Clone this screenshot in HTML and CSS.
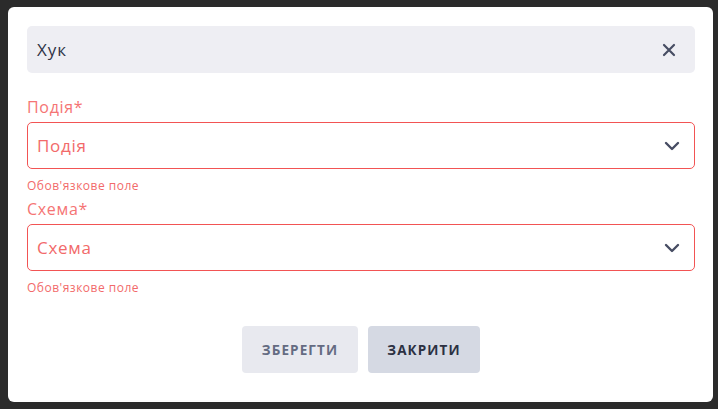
FILE: index.html
```html
<!DOCTYPE html>
<html lang="uk">
<head>
<meta charset="utf-8">
<link rel="stylesheet" href="styles.css">
</head>
<body>
<div class="modal">
  <div class="header">
    <span class="title">Хук</span>
    <svg class="close" width="14" height="14" viewBox="0 0 14 14"><path d="M2 2L12 12M12 2L2 12" stroke="#474d63" stroke-width="2.2" stroke-linecap="round"/></svg>
  </div>
  <div class="field first">
    <div class="label">Подія*</div>
    <div class="select"><span>Подія</span><svg class="chev" width="16" height="10" viewBox="0 0 16 10"><path d="M2 2L8 8L14 2" fill="none" stroke="#474d63" stroke-width="2.4" stroke-linecap="round" stroke-linejoin="round"/></svg></div>
    <div class="error">Обов'язкове поле</div>
  </div>
  <div class="field">
    <div class="label">Схема*</div>
    <div class="select"><span>Схема</span><svg class="chev" width="16" height="10" viewBox="0 0 16 10"><path d="M2 2L8 8L14 2" fill="none" stroke="#474d63" stroke-width="2.4" stroke-linecap="round" stroke-linejoin="round"/></svg></div>
    <div class="error">Обов'язкове поле</div>
  </div>
  <div class="actions">
    <button class="btn save">ЗБЕРЕГТИ</button>
    <button class="btn closebtn">ЗАКРИТИ</button>
  </div>
</div>
</body>
</html>
```
FILE: styles.css
```css
html, body {
  margin: 0;
  padding: 0;
  background: #2b2b2b;
  width: 718px;
  height: 409px;
  overflow: hidden;
  font-family: "Open Sans", "Noto Sans", sans-serif;
}
body {
  padding: 7px 5px 0 8px;
  box-sizing: border-box;
}
.modal {
  background: #ffffff;
  border-radius: 6px;
  width: 705px;
  height: 395px;
  box-sizing: border-box;
  padding: 19px 18px 0 19px;
}
.header {
  height: 47px;
  background: #eeeef3;
  border-radius: 5px;
  display: flex;
  align-items: center;
  justify-content: space-between;
  padding: 0 19px 0 10px;
}
.title {
  font-size: 17px;
  letter-spacing: 0.9px;
  color: #2e3447;
}
.close { display: block; }
.field.first { margin-top: 24px; }
.field { margin-top: 5px; }
.label {
  font-size: 16px;
  line-height: 20px;
  letter-spacing: 0.7px;
  color: #f57474;
  margin-bottom: 5px;
}
.select {
  height: 47px;
  box-sizing: border-box;
  border: 1px solid #f25454;
  border-radius: 5px;
  display: flex;
  align-items: center;
  justify-content: space-between;
  padding: 0 14px 0 9px;
  font-size: 17px;
  letter-spacing: 0.7px;
  color: #f26a6a;
}
.chev { display: block; }
.error {
  margin-top: 9px;
  font-size: 12px;
  line-height: 16px;
  letter-spacing: 0.5px;
  color: #f26a6a;
}
.actions {
  display: flex;
  justify-content: center;
  gap: 10px;
  margin-top: 30px;
}
.btn {
  height: 47px;
  border: none;
  border-radius: 4px;
  font-family: inherit;
  font-weight: 700;
  font-size: 13.5px;
  letter-spacing: 1.1px;
  padding: 0;
}
.save {
  width: 116px;
  background: #e8e9ef;
  color: #646b82;
}
.closebtn {
  width: 112px;
  background: #d5d9e3;
  color: #2c3142;
}
```
